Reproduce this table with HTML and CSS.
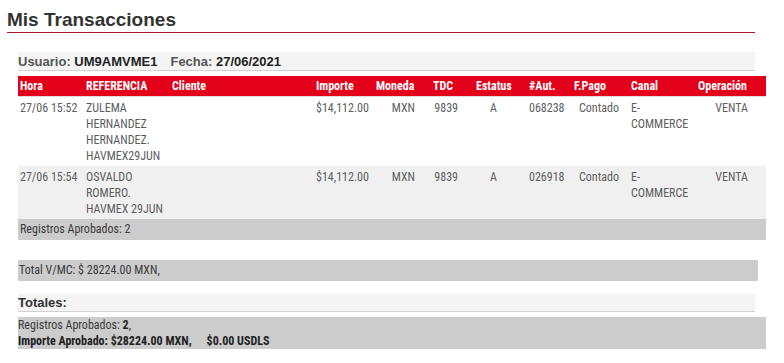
FILE: index.html
```html
<!DOCTYPE html>
<html lang="es">
<head>
<meta charset="utf-8">
<title>Mis Transacciones</title>
<link rel="stylesheet" href="styles.css">
</head>
<body>
<div class="page">
  <h1 class="title">Mis Transacciones</h1>
  <div class="content">
    <div class="info-bar"><span class="lbl">Usuario:</span> <span class="val">UM9AMVME1</span><span class="lbl fecha">Fecha:</span> <span class="val">27/06/2021</span></div>
    <table class="tx">
      <colgroup>
        <col class="c-hora"><col class="c-ref"><col class="c-cli"><col class="c-imp"><col class="c-mon"><col class="c-tdc"><col class="c-est"><col class="c-aut"><col class="c-fp"><col class="c-can"><col class="c-op">
      </colgroup>
      <thead>
        <tr>
          <th>Hora</th><th>REFERENCIA</th><th>Cliente</th><th>Importe</th><th>Moneda</th><th>TDC</th><th>Estatus</th><th>#Aut.</th><th>F.Pago</th><th>Canal</th><th>Operación</th>
        </tr>
      </thead>
      <tbody>
        <tr class="r1">
          <td>27/06 15:52</td><td class="ref">ZULEMA HERNANDEZ HERNANDEZ. HAVMEX29JUN</td><td></td><td>$14,112.00</td><td class="mon">MXN</td><td class="tdc">9839</td><td class="est">A</td><td>068238</td><td class="fp">Contado</td><td class="can">E-COMMERCE</td><td class="op">VENTA</td>
        </tr>
        <tr class="r2">
          <td>27/06 15:54</td><td class="ref">OSVALDO ROMERO. HAVMEX 29JUN</td><td></td><td>$14,112.00</td><td class="mon">MXN</td><td class="tdc">9839</td><td class="est">A</td><td>026918</td><td class="fp">Contado</td><td class="can">E-COMMERCE</td><td class="op">VENTA</td>
        </tr>
      </tbody>
    </table>
    <div class="sum-bar">Registros Aprobados: 2</div>
    <div class="total-bar">Total V/MC: $ 28224.00 MXN,</div>
    <div class="totales-head">Totales:</div>
    <div class="totales-bar">
      <div>Registros Aprobados: <b>2</b>,</div>
      <div class="strong">Importe Aprobado: $28224.00 MXN,<span class="usd">$0.00 USDLS</span></div>
    </div>
  </div>
</div>
</body>
</html>
```

FILE: styles.css
```css
html, body {
  margin: 0;
  padding: 0;
  background: #ffffff;
}

body {
  font-family: "Liberation Sans", Arial, sans-serif;
  color: #333333;
}

.page {
  width: 784px;
}

.title {
  margin: 9px 0 0 7px;
  width: 748px;
  font-size: 19px;
  line-height: 22px;
  font-weight: bold;
  color: #333333;
  padding-bottom: 1px;
  border-bottom: 1px solid #b3142a;
}

.content {
  padding-left: 18px;
}

.info-bar {
  margin-top: 19px;
  width: 737px;
  height: 17px;
  padding-top: 1px;
  line-height: 17px;
  background: #f4f4f4;
  border-bottom: 1px solid #d2d2d2;
  font-size: 13px;
  font-weight: bold;
  white-space: nowrap;
}

.info-bar .lbl { color: #555555; }
.info-bar .val { color: #222222; }
.info-bar .fecha { margin-left: 13px; }

.tx,
.sum-bar,
.total-bar,
.totales-bar {
  font-family: "Roboto Condensed", Roboto, "Liberation Sans Narrow", sans-serif;
  font-stretch: 75%;
}

.tx {
  margin-top: 5px;
  width: 748px;
  border-collapse: collapse;
  table-layout: fixed;
  font-size: 12px;
}

.c-hora { width: 66px; }
.c-ref { width: 86px; }
.c-cli { width: 144px; }
.c-imp { width: 60px; }
.c-mon { width: 57px; }
.c-tdc { width: 43px; }
.c-est { width: 53px; }
.c-aut { width: 45px; }
.c-fp { width: 57px; }
.c-can { width: 67px; }
.c-op { width: 70px; }

.tx th {
  background: #e2001a;
  color: #ffffff;
  font-weight: bold;
  text-align: left;
  height: 20px;
  line-height: 20px;
  padding: 0 0 0 2px;
  white-space: nowrap;
  border-bottom: 1px solid #dddddd;
}

.tx td {
  color: #5e5e5e;
  line-height: 16px;
  padding: 3px 2px 2px 2px;
  vertical-align: top;
  text-align: left;
}

.tx .r2 td { background: #f0f0f0; }

.tx td.ref { padding-right: 4px; }
.tx td.mon { text-align: right; padding-right: 16px; }
.tx td.tdc { text-align: right; padding-right: 16px; }
.tx td.est { padding-left: 16px; }
.tx td.fp { padding-left: 7px; }
.tx td.can { padding-right: 4px; }
.tx td.op { text-align: right; padding-right: 18px; }

.sum-bar,
.total-bar,
.totales-bar {
  background: #cccccc;
  font-size: 12px;
  color: #3a3a3a;
  padding-left: 2px;
}

.sum-bar {
  width: 746px;
  height: 21px;
  line-height: 21px;
}

.total-bar {
  margin-top: 20px;
  width: 739px;
  height: 21px;
  line-height: 21px;
  padding-left: 1px;
}

.totales-head {
  margin-top: 13px;
  width: 737px;
  height: 17px;
  line-height: 17px;
  background: #f4f4f4;
  border-bottom: 1px solid #d2d2d2;
  font-size: 13px;
  font-weight: bold;
  color: #333333;
}

.totales-bar {
  margin-top: 5px;
  width: 748px;
  padding-left: 0;
  height: 32px;
  line-height: 16px;
}

.totales-bar b { color: #222222; }

.totales-bar .strong {
  font-weight: bold;
  color: #222222;
}

.totales-bar .usd {
  margin-left: 15px;
}
```
